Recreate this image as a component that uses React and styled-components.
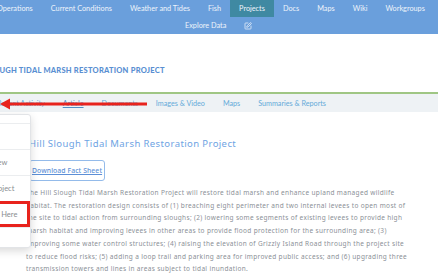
import React from "react";
import styled, { createGlobalStyle } from "styled-components";
import { SquarePen } from "lucide-react";

const GlobalStyle = createGlobalStyle`
  html, body {
    margin: 0;
    padding: 0;
    background: #ffffff;
    overflow: hidden;
  }
  body {
    font-family: "Lato", "Noto Sans", sans-serif;
  }
`;

const topItems = [
  "Operations",
  "Current Conditions",
  "Weather and Tides",
  "Fish",
  "Projects",
  "Docs",
  "Maps",
  "Wiki",
  "Workgroups",
  "Contact",
];

const tabs = [
  "Recent Activity",
  "Article",
  "Documents",
  "Images & Video",
  "Maps",
  "Summaries & Reports",
];

const menuItems = [
  { label: "Home", height: 26 },
  { label: "Timeline View", height: 26 },
  { label: "Edit This Project", height: 26 },
  { label: "Add Photos Here", height: 26, marked: true },
  { label: "", height: 12 },
];

const lines = [
  "The Hill Slough Tidal Marsh Restoration Project will restore tidal marsh and enhance upland managed wildlife",
  "habitat. The restoration design consists of (1) breaching eight perimeter and two internal levees to open most of",
  "the site to tidal action from surrounding sloughs; (2) lowering some segments of existing levees to provide high",
  "marsh habitat and improving levees in other areas to provide flood protection for the surrounding area; (3)",
  "improving some water control structures; (4) raising the elevation of Grizzly Island Road through the project site",
  "to reduce flood risks; (5) adding a loop trail and parking area for improved public access; and (6) upgrading three",
  "transmission towers and lines in areas subject to tidal inundation.",
];

const App = () => {
  return (
    <Page>
      <GlobalStyle />
      <NavBar>
        <NavRow $offset="-12px">
          {topItems.map((item) => (
            <NavItem key={item} $active={item === "Projects"}>
              {item}
            </NavItem>
          ))}
        </NavRow>
        <NavRow $offset="176px">
          <NavItem>Explore Data</NavItem>
          <NavItem>
            <SquarePen size={8} strokeWidth={2.2} />
          </NavItem>
        </NavRow>
      </NavBar>

      <ProjectTitle>Hill Slough Tidal Marsh Restoration Project</ProjectTitle>

      <TabBar>
        {tabs.map((tab) => (
          <Tab key={tab} $current={tab === "Article"}>
            {tab}
          </Tab>
        ))}
      </TabBar>

      <Content>
        <Heading>Hill Slough Tidal Marsh Restoration Project</Heading>
        <FactButton>Download Fact Sheet</FactButton>
        <Paragraph>
          {lines.map((line, i) => (
            <React.Fragment key={i}>
              {line}
              {i < lines.length - 1 && <br />}
            </React.Fragment>
          ))}
        </Paragraph>
      </Content>

      <Menu>
        {menuItems.map((item, i) => (
          <MenuItem key={i} $height={item.height} $marked={item.marked}>
            {item.label}
          </MenuItem>
        ))}
      </Menu>

      <Arrow width="150" height="12" viewBox="0 0 150 12">
        <line x1="6" y1="6" x2="147" y2="6" stroke="#e8231d" strokeWidth="3" />
        <polygon points="0,6 10,0.5 10,11.5" fill="#e8231d" />
      </Arrow>
    </Page>
  );
};

export default App;

const Page = styled.div`
  position: relative;
  width: 438px;
  height: 280px;
  overflow: hidden;
  background: #ffffff;
`;

const NavBar = styled.nav`
  background: #6a9fdc;
  height: 34px;
  display: flex;
  flex-direction: column;
`;

const NavRow = styled.div`
  display: flex;
  height: 17px;
  align-items: stretch;
  margin-left: ${(p) => p.$offset};
  white-space: nowrap;
`;

const NavItem = styled.div`
  display: flex;
  align-items: center;
  padding: 0 9px;
  font-size: 7.3px;
  color: #eef4fb;
  background: ${(p) => (p.$active ? "#3f89a2" : "transparent")};
  svg {
    color: #eef4fb;
  }
`;

const ProjectTitle = styled.h1`
  margin: 32px 0 0 -34px;
  font-family: "Lato", sans-serif;
  font-weight: 900;
  font-size: 7.5px;
  letter-spacing: 0.25px;
  text-transform: uppercase;
  color: #5a8fd2;
  white-space: nowrap;
  line-height: 10px;
`;

const TabBar = styled.div`
  margin-top: 16px;
  border-top: 2px solid #9fc684;
  background: #eef2f5;
  height: 18px;
  display: flex;
  align-items: center;
  margin-left: -12px;
  white-space: nowrap;
`;

const Tab = styled.div`
  padding: 0 9px;
  font-size: 7.2px;
  color: ${(p) => (p.$current ? "#4e8fc6" : "#64aad9")};
  text-decoration: ${(p) => (p.$current ? "underline" : "none")};
`;

const Content = styled.div`
  padding: 26px 0 0 26px;
  display: flex;
  flex-direction: column;
  align-items: flex-start;
`;

const Heading = styled.h2`
  margin: 0 0 0 3px;
  font-family: "Noto Sans", sans-serif;
  font-weight: 400;
  font-size: 9.5px;
  letter-spacing: 0.4px;
  line-height: 12px;
  color: #6ea3e3;
  white-space: nowrap;
`;

const FactButton = styled.div`
  margin: 10px 0 0 3px;
  padding: 5px 2px;
  border: 1px solid #94bbea;
  border-radius: 3px;
  font-family: "Noto Sans", sans-serif;
  font-size: 6.8px;
  font-weight: 500;
  letter-spacing: 0.1px;
  color: #5d8fd6;
  text-decoration: underline;
  line-height: 9px;
`;

const Paragraph = styled.p`
  margin: 6px 0 0 0;
  font-family: "Noto Sans", sans-serif;
  font-size: 6.5px;
  letter-spacing: 0.33px;
  line-height: 12.7px;
  color: #8b9097;
  white-space: nowrap;
`;

const Menu = styled.div`
  position: absolute;
  top: 114px;
  left: -50px;
  width: 79px;
  padding-top: 8px;
  padding-bottom: 8px;
  background: #ffffff;
  border: 1px solid #e2e4e7;
  border-radius: 3px;
  box-shadow: 0 3px 8px rgba(0, 0, 0, 0.15);
`;

const MenuItem = styled.div`
  height: ${(p) => p.$height}px;
  display: flex;
  align-items: center;
  padding-left: 10px;
  border-top: 1px solid #ebedef;
  font-family: "Lato", sans-serif;
  font-size: 7.5px;
  color: #8a8d91;
  white-space: nowrap;
  box-sizing: border-box;
  outline: ${(p) => (p.$marked ? "3px solid #e8231d" : "none")};
  outline-offset: -3px;
`;

const Arrow = styled.svg`
  position: absolute;
  top: 98px;
  left: 0;
`;
